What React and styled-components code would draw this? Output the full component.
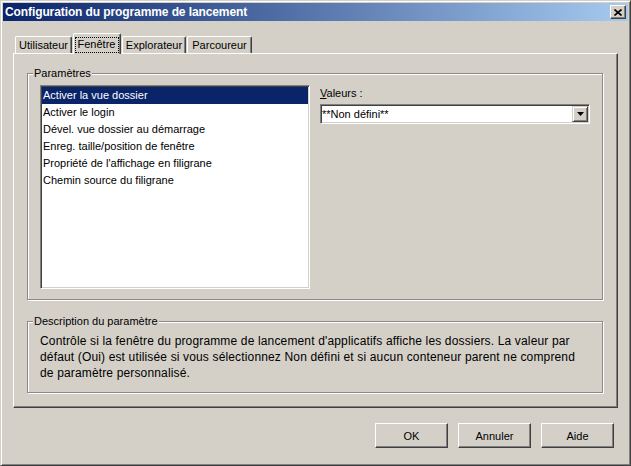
import React from 'react';
import styled, { createGlobalStyle } from 'styled-components';

const GlobalStyle = createGlobalStyle`
  html, body {
    margin: 0;
    padding: 0;
    background: #d4d0c8;
  }
  body {
    font-family: "Liberation Sans", Arial, sans-serif;
    font-size: 11px;
    color: #000;
  }
`;

// classic 3D edges
const raised = `
  border: 1px solid;
  border-color: #fff #404040 #404040 #fff;
  box-shadow: inset -1px -1px 0 #808080;
`;

const sunken = `
  border: 1px solid;
  border-color: #808080 #fff #fff #808080;
  box-shadow: inset 1px 1px 0 #404040, inset -1px -1px 0 #d4d0c8;
`;

const Window = styled.div`
  width: 631px;
  height: 466px;
  box-sizing: border-box;
  display: flex;
  flex-direction: column;
  background: #d4d0c8;
  border: 1px solid;
  border-color: #d4d0c8 #404040 #404040 #d4d0c8;
  box-shadow: inset 1px 1px 0 #fff, inset -1px -1px 0 #808080;
  padding: 2px;
`;

const TitleBar = styled.div`
  height: 18px;
  display: flex;
  align-items: center;
  justify-content: space-between;
  padding: 0 2px;
  background: linear-gradient(to right, #0a246a, #a6caf0);
`;

const Title = styled.span`
  color: #fff;
  font-weight: bold;
  font-size: 12px;
  letter-spacing: -0.1px;
`;

const CloseButton = styled.div`
  width: 16px;
  height: 14px;
  box-sizing: border-box;
  background: #d4d0c8;
  display: flex;
  align-items: center;
  justify-content: center;
  ${raised}
`;

const Body = styled.div`
  flex: 1;
  display: flex;
  flex-direction: column;
  padding: 12px 10px 0 10px;
`;

const TabStrip = styled.div`
  display: flex;
  align-items: flex-end;
  gap: 1px;
  height: 20px;
  padding-left: 2px;
`;

const Tab = styled.div`
  position: relative;
  z-index: ${({ $active }) => ($active ? 1 : 0)};
  width: ${({ $width }) => $width}px;
  height: ${({ $active }) => ($active ? 21 : 17)}px;
  margin-bottom: ${({ $active }) => ($active ? -1 : 0)}px;
  box-sizing: border-box;
  background: #d4d0c8;
  border: 1px solid;
  border-bottom: none;
  border-color: #fff #404040 #404040 #fff;
  box-shadow: inset -1px 0 0 #808080;
  border-radius: 2px 2px 0 0;
  display: flex;
  justify-content: center;
  padding-top: ${({ $active }) => ($active ? 0 : 2)}px;
  line-height: 13px;
`;

const FocusRing = styled.span`
  display: block;
  box-sizing: border-box;
  width: calc(100% - 2px);
  height: 16px;
  margin: 3px 1px 0 0;
  border: 1px dotted #000;
  text-align: center;
  line-height: 13px;
`;

const TabPanel = styled.div`
  height: 355px;
  box-sizing: border-box;
  ${raised}
  padding: 13px 14px 0 13px;
`;

const GroupBox = styled.fieldset`
  margin: ${({ $top }) => $top || 0}px 0 0 0;
  padding: 0;
  min-width: 0;
  border: 1px solid #8a8a8a;
  box-shadow: inset 1px 1px 0 #fff, 1px 1px 0 #fff;
`;

const Legend = styled.legend`
  margin-left: 5px;
  padding: 0 1px;
  line-height: 13px;
  font-size: 11px;
  background: #d4d0c8;
`;

const ParamsBody = styled.div`
  display: flex;
  gap: 10px;
  padding: 5px 12px 10px 12px;
`;

const ListBox = styled.div`
  width: 270px;
  height: 204px;
  box-sizing: border-box;
  background: #fff;
  ${sunken}
  padding: 1px 1px 0 1px;
`;

const ListRow = styled.div`
  height: 17px;
  line-height: 17px;
  padding-left: 1px;
  white-space: nowrap;
  background: ${({ $selected }) => ($selected ? '#0a246a' : 'transparent')};
  color: ${({ $selected }) => ($selected ? '#fff' : '#000')};
`;

const ValuesColumn = styled.div`
  flex: 1;
  display: flex;
  flex-direction: column;
  padding-top: 2px;
`;

const FieldLabel = styled.label`
  line-height: 13px;
  u {
    text-decoration: underline;
  }
`;

const Combo = styled.div`
  margin-top: 4px;
  height: 20px;
  box-sizing: border-box;
  background: #fff;
  ${sunken}
  display: flex;
  align-items: center;
  padding: 0 1px 0 1px;
`;

const ComboText = styled.span`
  flex: 1;
  white-space: nowrap;
`;

const DropButton = styled.div`
  width: 16px;
  height: 16px;
  box-sizing: border-box;
  background: #d4d0c8;
  border: 1px solid;
  border-color: #d4d0c8 #404040 #404040 #d4d0c8;
  box-shadow: inset 1px 1px 0 #fff, inset -1px -1px 0 #808080;
  display: flex;
  align-items: center;
  justify-content: center;
`;

const DescText = styled.div`
  padding: 5px 12px 11px 12px;
  font-size: 12px;
  line-height: 16px;
  letter-spacing: 0.15px;
  white-space: nowrap;
`;

const ButtonRow = styled.div`
  margin-top: 15px;
  display: flex;
  justify-content: flex-end;
  gap: 10px;
  padding-right: 4px;
`;

const Button = styled.div`
  width: 73px;
  height: 25px;
  box-sizing: border-box;
  background: #d4d0c8;
  ${raised}
  display: flex;
  align-items: center;
  justify-content: center;
  font-size: 11px;
`;

const tabs = [
  { label: 'Utilisateur', width: 57 },
  { label: 'Fenêtre', width: 48, active: true },
  { label: 'Explorateur', width: 64 },
  { label: 'Parcoureur', width: 65 },
];

const params = [
  'Activer la vue dossier',
  'Activer le login',
  'Dével. vue dossier au démarrage',
  'Enreg. taille/position de fenêtre',
  "Propriété de l'affichage en filigrane",
  'Chemin source du filigrane',
];

const App = () => {
  return (
    <>
      <GlobalStyle />
      <Window>
        <TitleBar>
          <Title>Configuration du programme de lancement</Title>
          <CloseButton>
            <svg width="8" height="7" viewBox="0 0 8 7">
              <path d="M0.5 0.5 L7.5 6.5 M7.5 0.5 L0.5 6.5" stroke="#000" strokeWidth="1.6" />
            </svg>
          </CloseButton>
        </TitleBar>
        <Body>
          <TabStrip>
            {tabs.map(t => (
              <Tab key={t.label} $width={t.width} $active={t.active}>
                {t.active ? <FocusRing>{t.label}</FocusRing> : t.label}
              </Tab>
            ))}
          </TabStrip>
          <TabPanel>
            <GroupBox>
              <Legend>Paramètres</Legend>
              <ParamsBody>
                <ListBox>
                  {params.map((p, i) => (
                    <ListRow key={p} $selected={i === 0}>{p}</ListRow>
                  ))}
                </ListBox>
                <ValuesColumn>
                  <FieldLabel><u>V</u>aleurs :</FieldLabel>
                  <Combo>
                    <ComboText>**Non défini**</ComboText>
                    <DropButton>
                      <svg width="7" height="4" viewBox="0 0 7 4">
                        <path d="M0 0 H7 L3.5 4 Z" fill="#000" />
                      </svg>
                    </DropButton>
                  </Combo>
                </ValuesColumn>
              </ParamsBody>
            </GroupBox>
            <GroupBox $top={15}>
              <Legend>Description du paramètre</Legend>
              <DescText>
                Contrôle si la fenêtre du programme de lancement d'applicatifs affiche les dossiers. La valeur par
                <br />
                défaut (Oui) est utilisée si vous sélectionnez Non défini et si aucun conteneur parent ne comprend
                <br />
                de paramètre personnalisé.
              </DescText>
            </GroupBox>
          </TabPanel>
          <ButtonRow>
            <Button>OK</Button>
            <Button>Annuler</Button>
            <Button>Aide</Button>
          </ButtonRow>
        </Body>
      </Window>
    </>
  );
};

export default App;
